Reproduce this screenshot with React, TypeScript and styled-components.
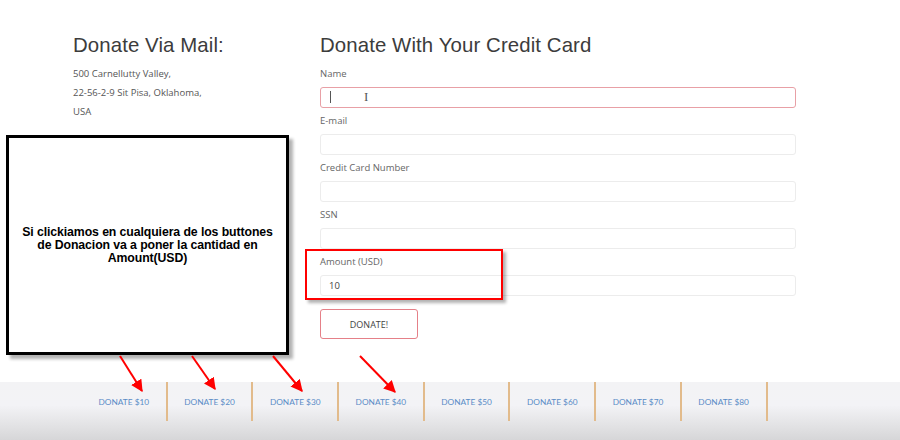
import styled, { createGlobalStyle } from 'styled-components';

const GlobalStyle = createGlobalStyle`
  html, body {
    margin: 0;
    padding: 0;
    background: #fff;
  }
  * {
    box-sizing: border-box;
  }
`;

const Page = styled.div`
  position: relative;
  width: 900px;
  height: 440px;
  overflow: hidden;
  display: flex;
  flex-direction: column;
  font-family: 'Open Sans', 'Liberation Sans', sans-serif;
`;

const Content = styled.div`
  flex: 1;
  display: flex;
  padding: 33px 0 0 73px;
`;

const MailColumn = styled.div`
  width: 247px;
`;

const CardColumn = styled.div`
  width: 476px;
`;

const Heading = styled.h2`
  margin: 0 0 10px;
  font-family: 'Liberation Sans', Arial, sans-serif;
  font-weight: 400;
  font-size: 20.4px;
  line-height: 24px;
  letter-spacing: 0.1px;
  color: #3c3c3c;
`;

const Address = styled.div`
  margin-top: -3px;
`;

const AddressLine = styled.p`
  margin: 0;
  font-size: 9.5px;
  line-height: 19px;
  color: #555;
`;

const Label = styled.label`
  display: block;
  font-size: 9.5px;
  line-height: 14px;
  color: #666;
  margin-bottom: 6px;
`;

const Field = styled.div`
  margin-bottom: 6px;
`;

const Input = styled.input<{ $focused?: boolean }>`
  display: block;
  width: 100%;
  height: 21px;
  border: 1px solid ${p => (p.$focused ? '#e8a0a6' : '#ececec')};
  border-radius: 3px;
  padding: 0 8px;
  font-family: 'Open Sans', 'Liberation Sans', sans-serif;
  font-size: 9.5px;
  color: #444;
  background: #fff;
  outline: none;
`;

const InputWrap = styled.div`
  position: relative;
`;

const Caret = styled.span`
  position: absolute;
  left: 10px;
  top: 4px;
  width: 1px;
  height: 12px;
  background: #555;
`;

const IBeam = styled.span`
  position: absolute;
  left: 44px;
  top: 2px;
  font-family: 'Liberation Serif', serif;
  font-size: 13px;
  line-height: 15px;
  color: #555;
`;

const DonateButton = styled.button`
  margin-top: 7px;
  width: 98px;
  height: 30px;
  border: 1px solid #e58088;
  border-radius: 3px;
  background: #fff;
  font-family: 'Open Sans', 'Liberation Sans', sans-serif;
  font-size: 9px;
  color: #444;
`;

const Bar = styled.div`
  height: 58px;
  display: flex;
  padding-left: 82px;
  background: linear-gradient(
    to bottom,
    #f3f3f5 0%,
    #f3f3f6 40%,
    #e0e0e2 80%,
    #d6d6d8 100%
  );
`;

const BarItem = styled.div`
  width: 85.7px;
  height: 39px;
  display: flex;
  align-items: center;
  justify-content: center;
  padding-top: 1px;
  border-right: 2px solid #e2bb8c;
  font-family: Lato, 'Open Sans', sans-serif;
  font-size: 8.3px;
  color: #5a8cc6;
`;

const NoteBox = styled.div`
  position: absolute;
  left: 6px;
  top: 135px;
  width: 283px;
  height: 220px;
  border: 3px solid #000;
  background: #fff;
  box-shadow: 4px 4px 3px rgba(0, 0, 0, 0.3);
  display: flex;
  align-items: center;
  justify-content: center;
  padding: 0 10px;
  text-align: center;
  font-family: 'Liberation Sans', Arial, sans-serif;
  font-weight: 700;
  font-size: 12.3px;
  line-height: 13px;
  letter-spacing: -0.1px;
  color: #000;
`;

const Highlight = styled.div`
  position: absolute;
  left: 305px;
  top: 249px;
  width: 198px;
  height: 51px;
  border: 2.5px solid #f00;
  box-shadow: 3px 3px 3px rgba(0, 0, 0, 0.3);
`;

const ArrowLayer = styled.svg`
  position: absolute;
  left: 0;
  top: 0;
  pointer-events: none;
`;

const amounts = [10, 20, 30, 40, 50, 60, 70, 80];

const arrows = [
  [120, 356, 142, 391],
  [192, 356, 215, 389],
  [273, 356, 302, 391],
  [360, 356, 395, 392],
];

export default function App() {
  return (
    <Page>
      <GlobalStyle />
      <Content>
        <MailColumn>
          <Heading>Donate Via Mail:</Heading>
          <Address>
            <AddressLine>500 Carnellutty Valley,</AddressLine>
            <AddressLine>22-56-2-9 Sit Pisa, Oklahoma,</AddressLine>
            <AddressLine>USA</AddressLine>
          </Address>
        </MailColumn>
        <CardColumn>
          <Heading>Donate With Your Credit Card</Heading>
          <Field>
            <Label>Name</Label>
            <InputWrap>
              <Input $focused readOnly />
              <Caret />
              <IBeam>I</IBeam>
            </InputWrap>
          </Field>
          <Field>
            <Label>E-mail</Label>
            <Input readOnly />
          </Field>
          <Field>
            <Label>Credit Card Number</Label>
            <Input readOnly />
          </Field>
          <Field>
            <Label>SSN</Label>
            <Input readOnly />
          </Field>
          <Field>
            <Label>Amount (USD)</Label>
            <Input readOnly value='10' />
          </Field>
          <DonateButton>DONATE!</DonateButton>
        </CardColumn>
      </Content>
      <Bar>
        {amounts.map(a => (
          <BarItem key={a}>DONATE ${a}</BarItem>
        ))}
      </Bar>
      <NoteBox>
        Si clickiamos en cualquiera de los buttones de Donacion va a poner la
        cantidad en Amount(USD)
      </NoteBox>
      <Highlight />
      <ArrowLayer width='900' height='440'>
        <defs>
          <marker
            id='head'
            viewBox='0 0 10 10'
            refX='9'
            refY='5'
            markerWidth='6'
            markerHeight='6'
            orient='auto'
          >
            <path d='M0 0 L10 5 L0 10 Z' fill='#f00' />
          </marker>
        </defs>
        {arrows.map(([x1, y1, x2, y2], i) => (
          <line
            key={i}
            x1={x1}
            y1={y1}
            x2={x2}
            y2={y2}
            stroke='#f00'
            strokeWidth='2'
            markerEnd='url(#head)'
          />
        ))}
      </ArrowLayer>
    </Page>
  );
}
